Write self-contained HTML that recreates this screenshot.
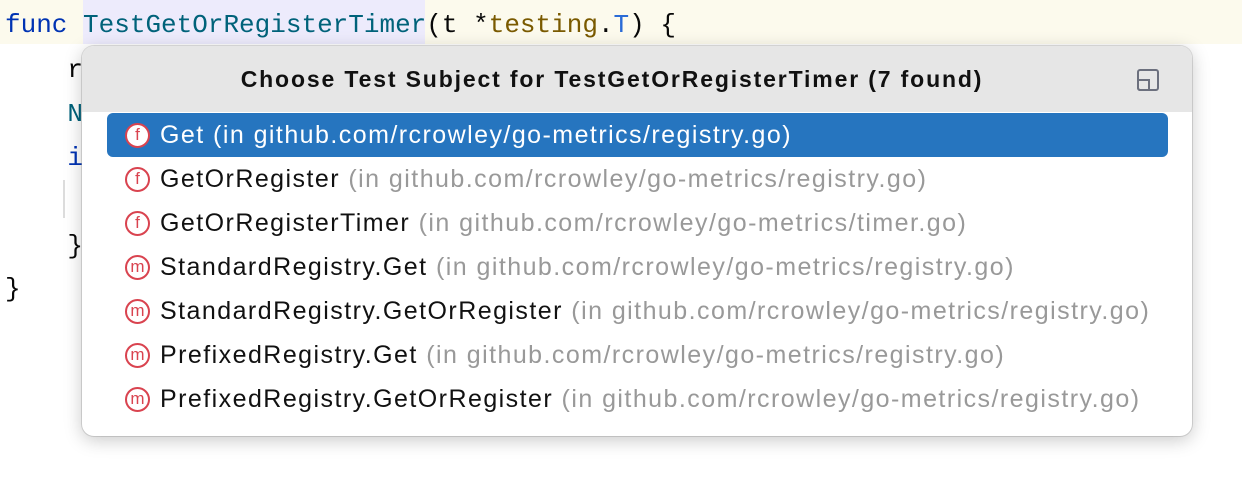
<!DOCTYPE html>
<html><head><meta charset="utf-8"><style>
body{margin:0;width:1242px;height:496px;background:#fff;position:relative;overflow:hidden;font-family:"Liberation Sans",sans-serif}
.code{position:absolute;left:5px;font-family:"Liberation Mono",monospace;font-size:26px;color:#080808;white-space:pre;line-height:44px}
.top{position:absolute;left:0;top:0;width:1242px;height:44px;background:#fcfaed}
.hl{position:absolute;left:83px;top:0;width:342px;height:44px;background:#edebfc}
.pop{position:absolute;left:82px;top:46px;width:1110px;height:390px;background:#fff;border-radius:12px;box-shadow:0 4px 18px rgba(0,0,0,.22),0 0 0 1px rgba(0,0,0,.12);overflow:hidden}
.hdr{height:66px;background:#e6e6e6;text-align:center;font-weight:bold;font-size:23px;line-height:66px;color:#111;letter-spacing:1.85px;padding-right:50px}
.row{position:absolute;left:25px;width:1061px;height:44px;line-height:44px;font-size:25px;color:#111;white-space:nowrap;letter-spacing:1.45px}
.row.sel{background:#2675bf;color:#fff;border-radius:6px}
.row .g{color:#999}
.ic{position:absolute;left:18px;top:10px;width:21px;height:21px;border:2px solid #d9434f;border-radius:50%;color:#d9434f;font-size:17px;line-height:20px;text-align:center;background:#fff;letter-spacing:0}
.row span.t{position:absolute;left:53px}
.btn{position:absolute;left:1055px;top:23px;width:18px;height:18px;border:2px solid #6c707e;border-radius:3px}
.btn:after{content:"";position:absolute;left:-2px;bottom:-2px;width:9px;height:8px;border:2px solid #6c707e;border-radius:0 0 0 3px}
</style></head><body>
<div class="top"></div><div class="hl"></div>
<div class="code" style="top:3px"><span style="color:#0033b3">func</span> <span style="color:#00627a">TestGetOrRegisterTimer</span>(t *<span style="color:#7a5a00">testing</span>.<span style="color:#2a6bd6">T</span>) {</div>
<div class="code" style="top:48px">    r</div>
<div class="code" style="top:92px">    <span style="color:#00627a">N</span></div>
<div class="code" style="top:136px">    <span style="color:#0033b3">i</span></div>
<div style="position:absolute;left:63px;top:180px;width:2px;height:38px;background:#ddd"></div>
<div class="code" style="top:224px">    }</div>
<div class="code" style="top:267px">}</div>
<div class="pop">
<div class="hdr">Choose Test Subject for TestGetOrRegisterTimer (7 found)</div>
<div class="btn"></div>
<div class="row sel" style="top:67px"><div class="ic">f</div><span class="t">Get (in github.com/rcrowley/go-metrics/registry.go)</span></div>
<div class="row" style="top:111px"><div class="ic">f</div><span class="t">GetOrRegister <span class="g">(in github.com/rcrowley/go-metrics/registry.go)</span></span></div>
<div class="row" style="top:155px"><div class="ic">f</div><span class="t">GetOrRegisterTimer <span class="g">(in github.com/rcrowley/go-metrics/timer.go)</span></span></div>
<div class="row" style="top:199px"><div class="ic">m</div><span class="t">StandardRegistry.Get <span class="g">(in github.com/rcrowley/go-metrics/registry.go)</span></span></div>
<div class="row" style="top:243px"><div class="ic">m</div><span class="t">StandardRegistry.GetOrRegister <span class="g">(in github.com/rcrowley/go-metrics/registry.go)</span></span></div>
<div class="row" style="top:287px"><div class="ic">m</div><span class="t">PrefixedRegistry.Get <span class="g">(in github.com/rcrowley/go-metrics/registry.go)</span></span></div>
<div class="row" style="top:331px"><div class="ic">m</div><span class="t">PrefixedRegistry.GetOrRegister <span class="g">(in github.com/rcrowley/go-metrics/registry.go)</span></span></div>
</div>
</body></html>
